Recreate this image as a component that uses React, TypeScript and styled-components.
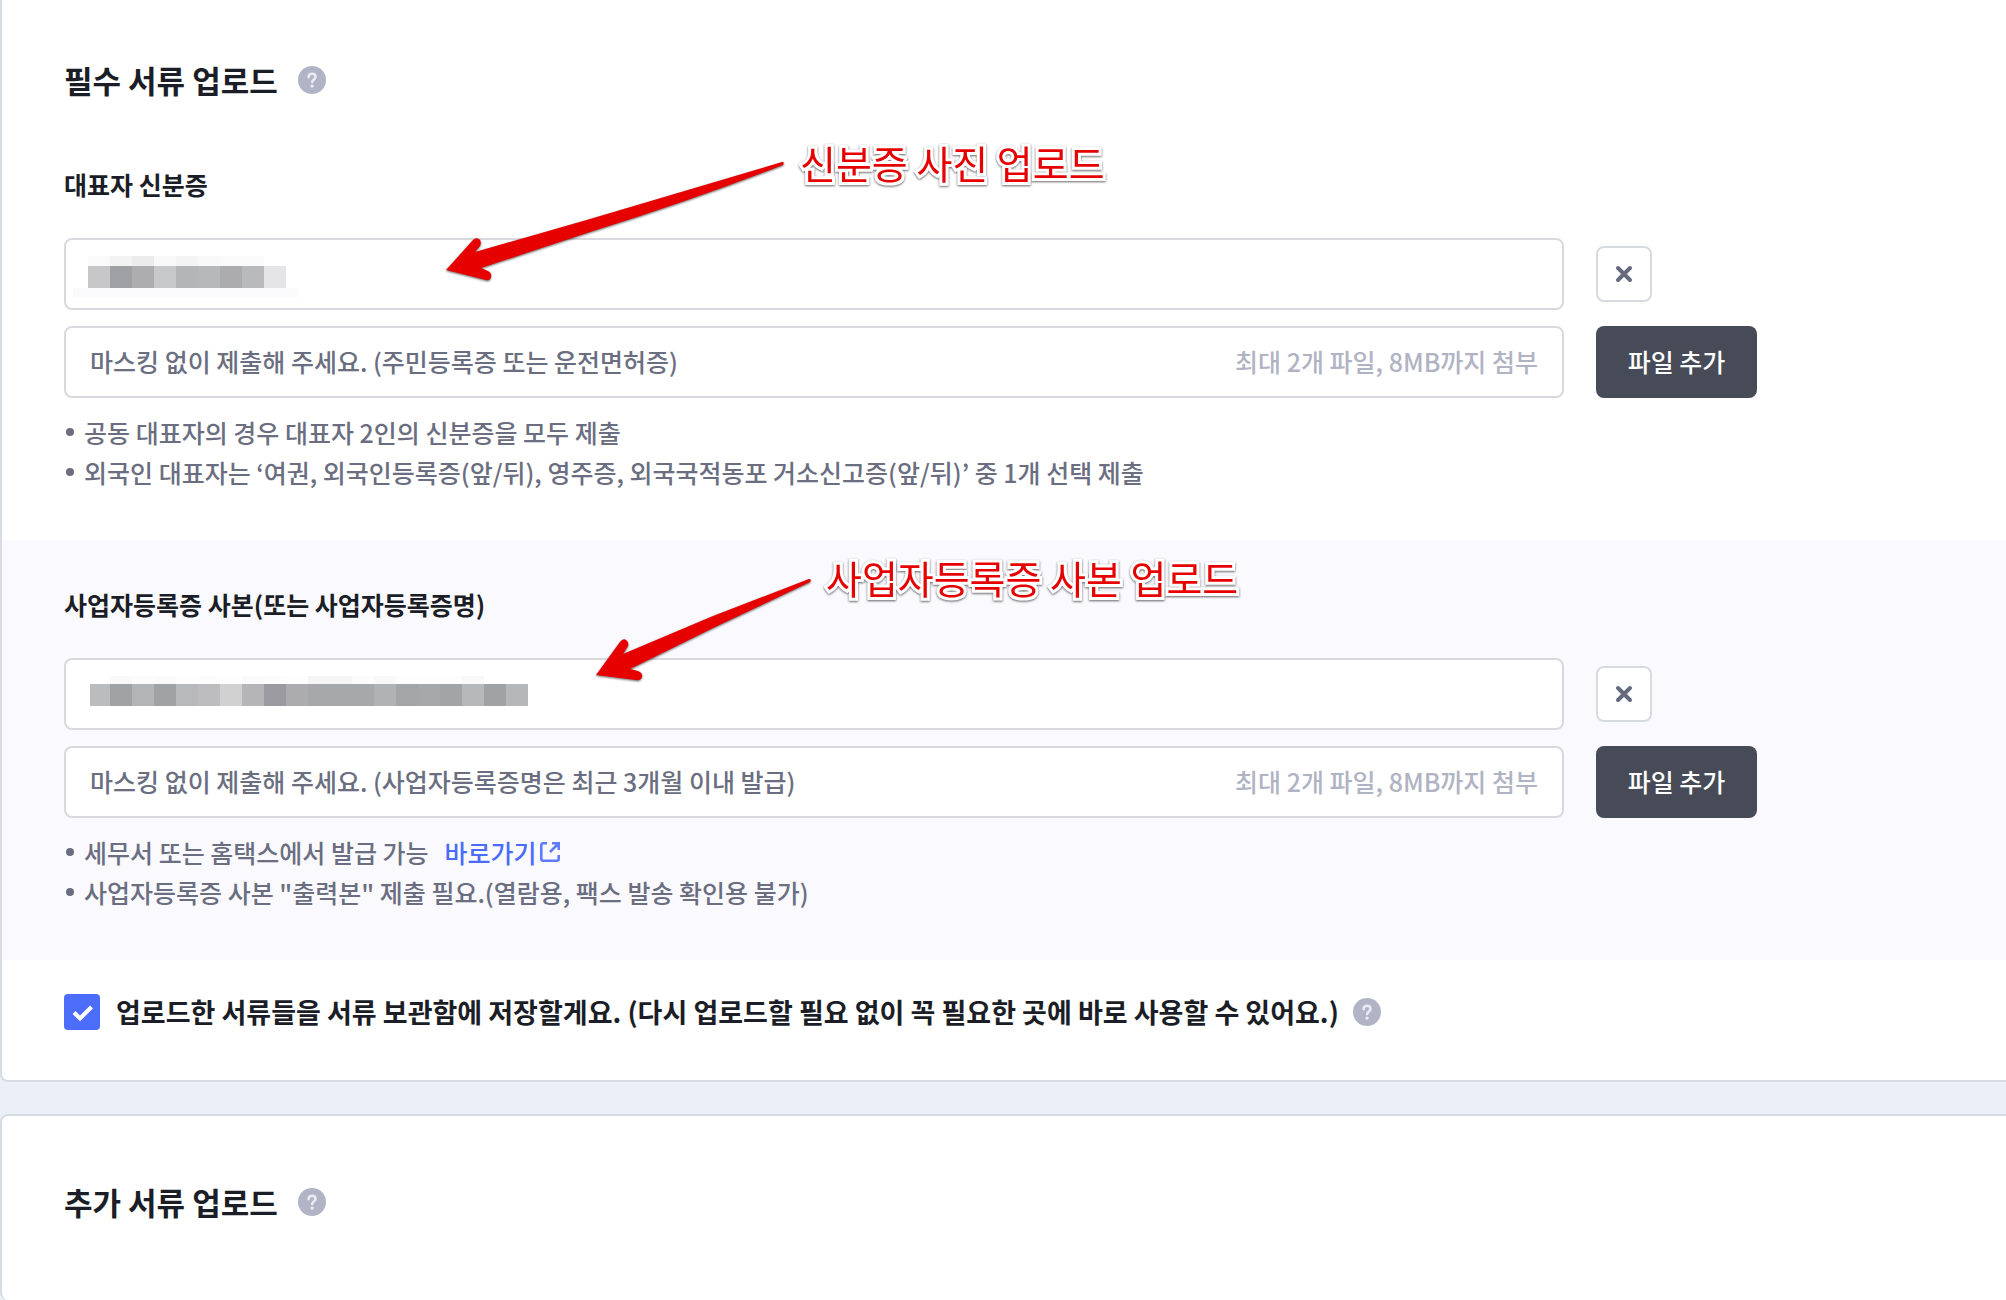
import React from 'react';
import styled, { createGlobalStyle } from 'styled-components';

const GlobalStyle = createGlobalStyle`
  * { box-sizing: border-box; }
  body { margin: 0; background: #ebeff7; color: #1b1e26; font-family: "Noto Sans CJK KR", "Noto Sans", sans-serif; font-size: 25px; line-height: 40px; }
`;

const Page = styled.div`
  display: flex;
  flex-direction: column;
  gap: 32px;
  min-height: 100vh;
  overflow: hidden;
`;

const Card = styled.section<{ $first?: boolean }>`
  position: relative;
  background: #fff;
  border: 2px solid #d6dce4;
  border-right: 0;
  border-radius: ${p => (p.$first ? '0 0 0 8px' : '8px 0 0 8px')};
  ${p => (p.$first ? 'border-top: 0;' : 'border-bottom: 0; flex: 1;')}
`;

const CardHeader = styled.header<{ $first?: boolean }>`
  display: flex;
  align-items: center;
  gap: 20px;
  padding: ${p => (p.$first ? '60px 62px 20px' : '66px 62px 60px')};
`;

const Title = styled.h2`
  margin: 0;
  font-size: 31px;
  font-weight: 700;
  line-height: 40px;
`;

const HelpButton = styled.button`
  display: flex;
  width: 28px;
  height: 28px;
  padding: 0;
  border: 0;
  background: none;
`;

const DocBlock = styled.div<{ $tinted?: boolean }>`
  padding: 44px 62px 48px;
  background: ${p => (p.$tinted ? '#f9f9fe' : 'transparent')};
`;

const DocLabel = styled.label`
  display: block;
  margin-bottom: 34px;
  font-weight: 700;
`;

const Row = styled.div`
  display: grid;
  grid-template-columns: minmax(0, 1500px) 161px;
  align-items: center;
  gap: 32px;
  & + & { margin-top: 16px; }
`;

const Field = styled.div`
  display: flex;
  align-items: center;
  gap: 24px;
  height: 72px;
  padding: 0 24px 2px;
  background: #fff;
  border: 2px solid #d7d9df;
  border-radius: 8px;
`;

const FieldInput = styled.input`
  flex: 1;
  min-width: 0;
  padding: 0;
  border: 0;
  outline: 0;
  background: none;
  font: inherit;
  font-weight: 500;
  color: #6a6e80;
  &::placeholder { color: #6a6e80; opacity: 1; }
`;

const Limit = styled.span`
  color: #b0b3c3;
  font-weight: 500;
  white-space: nowrap;
`;

const RemoveButton = styled.button`
  display: flex;
  align-items: center;
  justify-content: center;
  width: 56px;
  height: 56px;
  padding: 0;
  background: #fff;
  border: 2px solid #d7dadf;
  border-radius: 8px;
`;

const AddButton = styled.button`
  height: 72px;
  padding: 0 0 2px;
  border: 0;
  border-radius: 8px;
  background: #464b57;
  color: #fff;
  font: inherit;
  font-weight: 500;
`;

const Notes = styled.ul`
  margin: 14px 0 0;
  padding: 0;
  list-style: none;
  color: #6a6e80;
  font-weight: 500;
`;

const Note = styled.li`
  display: flex;
  align-items: center;
  padding-left: 2px;
  &::before {
    content: '';
    width: 8px;
    height: 8px;
    margin-right: 10px;
    border-radius: 50%;
    background: #6a6e80;
  }
`;

const NoteLink = styled.a`
  display: inline-flex;
  align-items: center;
  gap: 2px;
  margin-left: 16px;
  color: #4b6bfb;
  text-decoration: none;
`;

const SaveRow = styled.div`
  display: flex;
  align-items: center;
  gap: 14px;
  padding: 32px 62px 48px;
`;

const SaveLabel = styled.label`
  display: flex;
  align-items: center;
  gap: 16px;
  font-size: 27px;
  font-weight: 700;
`;

const CheckWrap = styled.span`
  display: grid;
  width: 36px;
  height: 36px;
  & > * { grid-area: 1 / 1; }
  & > svg { pointer-events: none; }
`;

const Check = styled.input`
  appearance: none;
  width: 36px;
  height: 36px;
  margin: 0;
  border-radius: 4px;
  background: #c9ccd6;
  &:checked { background: #4b6dfa; }
`;

const Mosaic = styled.svg`
  flex: none;
  overflow: visible;
`;

const Callout = styled.div<{ $x: number; $y: number }>`
  position: absolute;
  left: ${p => p.$x}px;
  top: ${p => p.$y}px;
  display: flex;
  pointer-events: none;
`;

const CalloutText = styled.span`
  font-size: 39px;
  line-height: 48px;
  color: #e60000;
  white-space: nowrap;
  -webkit-text-stroke: 6px #fff;
  paint-order: stroke fill;
  filter: drop-shadow(0 1px 1px rgba(0, 0, 0, 0.6));
`;

const Arrow = styled.svg`
  flex: none;
  filter: drop-shadow(0 1px 1px rgba(0, 0, 0, 0.6));
`;

function Help({ label }: { label: string }) {
  return (
    <HelpButton type="button" aria-label={label}>
      <svg width="28" height="28" viewBox="0 0 28 28" fill="none">
        <circle cx="14" cy="14" r="14" fill="#b0b4c5" />
        <path d="M10.6 11.2c0-2 1.4-3.4 3.5-3.4s3.4 1.3 3.4 3.1c0 2.5-3.3 2.6-3.3 5.2" stroke="#e9ebf2" strokeWidth="2.6" strokeLinecap="round" />
        <circle cx="14.1" cy="20.1" r="1.7" fill="#e9ebf2" />
      </svg>
    </HelpButton>
  );
}

function Cross() {
  return (
    <svg width="18" height="18" viewBox="0 0 18 18">
      <path d="M3 3 15 15M15 3 3 15" stroke="#656b7c" strokeWidth="4" strokeLinecap="round" />
    </svg>
  );
}

type Tile = [number, number, number, number, string];

function MaskedName({ tiles, label }: { tiles: Tile[]; label: string }) {
  return (
    <Mosaic width="440" height="50" role="img" aria-label={label}>
      {tiles.map(([x, y, w, h, fill], i) => (
        <rect key={i} x={x} y={y} width={w} height={h} fill={fill} />
      ))}
    </Mosaic>
  );
}

const strip = (start: number, y: number, h: number, colors: string[]): Tile[] =>
  colors.map((c, i) => [start + i * 22, y, 22, h, c]);

const idTiles: Tile[] = [
  ...strip(-2, 8, 10, ['#fafafa', '#f3f3f3', '#ececec', '#f9f9f9', '#f4f4f4', '#f9f9f9', '#fafafa', '#fafafa']),
  ...strip(-2, 18, 22, ['#c7c7c9', '#9fa0a4', '#adadaf', '#c7c8ca', '#b4b5b7', '#b7b8ba', '#acacae', '#b9babc', '#e5e5e7']),
  [-17, 40, 225, 9, '#fafafc'],
];

const licenseTiles: Tile[] = [
  ...strip(20, 8, 8, ['#f9f9f9', '#fcfcfc', '#fafafa', '#fdfdfd', '#fcfcfc', '#fdfdfd', '#fafafa', '#fcfcfc', '#fdfdfd', '#f5f5f5', '#f5f5f5', '#fcfcfc', '#f9f9f9', '#fdfdfd', '#fdfdfd', '#fdfdfd', '#f9f9f9']),
  [0, 16, 20, 22, '#bbbcbe'],
  ...strip(20, 16, 22, ['#a1a2a4', '#b3b4b6', '#a0a2a4', '#b8b9bb', '#bdbdbf', '#d1d1d1', '#b5b5b7', '#9b9aa0', '#acacae', '#a7a8aa', '#a7a8aa', '#a7a8aa', '#b1b2b4', '#a4a5a7', '#a7a8aa', '#a3a4a6', '#b7b8ba', '#a1a2a4', '#b6b7b9']),
];

interface DocProps {
  id: string;
  label: string;
  hint: string;
  tiles: Tile[];
  tinted?: boolean;
  children: React.ReactNode;
}

function DocumentUpload({ id, label, hint, tiles, tinted, children }: DocProps) {
  return (
    <DocBlock $tinted={tinted}>
      <DocLabel htmlFor={id}>{label}</DocLabel>
      <Row>
        <Field><MaskedName tiles={tiles} label="첨부된 파일" /></Field>
        <RemoveButton type="button" aria-label="파일 삭제"><Cross /></RemoveButton>
      </Row>
      <Row>
        <Field>
          <FieldInput id={id} readOnly placeholder={hint} />
          <Limit>최대 2개 파일, 8MB까지 첨부</Limit>
        </Field>
        <AddButton type="button">파일 추가</AddButton>
      </Row>
      <Notes>{children}</Notes>
    </DocBlock>
  );
}

export default function App() {
  return (
    <>
      <GlobalStyle />
      <Page>
        <Card $first>
          <CardHeader $first>
            <Title>필수 서류 업로드</Title>
            <Help label="필수 서류 도움말" />
          </CardHeader>
          <DocumentUpload id="id-card" label="대표자 신분증" hint="마스킹 없이 제출해 주세요. (주민등록증 또는 운전면허증)" tiles={idTiles}>
            <Note>공동 대표자의 경우 대표자 2인의 신분증을 모두 제출</Note>
            <Note>외국인 대표자는 ‘여권, 외국인등록증(앞/뒤), 영주증, 외국국적동포 거소신고증(앞/뒤)’ 중 1개 선택 제출</Note>
          </DocumentUpload>
          <DocumentUpload id="license" tinted label="사업자등록증 사본(또는 사업자등록증명)" hint="마스킹 없이 제출해 주세요. (사업자등록증명은 최근 3개월 이내 발급)" tiles={licenseTiles}>
            <Note>
              세무서 또는 홈택스에서 발급 가능
              <NoteLink href="#hometax">
                바로가기
                <svg width="22" height="22" viewBox="0 0 22 22" fill="none" stroke="#5f7afb" strokeWidth="2.6">
                  <path d="M8 2.3H4.3a2 2 0 0 0-2 2v13.4a2 2 0 0 0 2 2h13.4a2 2 0 0 0 2-2V14M13 2.3h6.7V9M19.5 2.5 11 11" />
                </svg>
              </NoteLink>
            </Note>
            <Note>사업자등록증 사본 "출력본" 제출 필요.(열람용, 팩스 발송 확인용 불가)</Note>
          </DocumentUpload>
          <SaveRow>
            <SaveLabel>
              <CheckWrap>
                <Check type="checkbox" defaultChecked />
                <svg width="36" height="36" viewBox="0 0 36 36" fill="none">
                  <path d="M10 18.5 16 24.5 27.5 13" stroke="#fff" strokeWidth="4" />
                </svg>
              </CheckWrap>
              업로드한 서류들을 서류 보관함에 저장할게요. (다시 업로드할 필요 없이 꼭 필요한 곳에 바로 사용할 수 있어요.)
            </SaveLabel>
            <Help label="서류 보관함 도움말" />
          </SaveRow>
          <Callout $x={440} $y={138}>
            <Arrow width="358" height="148" viewBox="442 138 358 148">
              <path d="M782 162Q785 162 783 165Q690 201 590 232L481 268L488 271Q492 273 491 277Q490 281 486 280L446 270L473 240Q476 237 479 239Q482 241 480 246L475 252L590 219Z" fill="#e60000" />
            </Arrow>
            <CalloutText>신분증 사진 업로드</CalloutText>
          </Callout>
          <Callout $x={590} $y={553}>
            <Arrow width="234" height="134" viewBox="592 553 234 134">
              <path d="M809 579Q812 579 810 582L713 628L630 669L638 671Q643 673 642 677Q640 681 636 680L596 675L620 642Q623 638 626 640Q629 642 628 646L623 654L713 616Z" fill="#e60000" />
            </Arrow>
            <CalloutText>사업자등록증 사본 업로드</CalloutText>
          </Callout>
        </Card>
        <Card>
          <CardHeader>
            <Title>추가 서류 업로드</Title>
            <Help label="추가 서류 도움말" />
          </CardHeader>
        </Card>
      </Page>
    </>
  );
}
